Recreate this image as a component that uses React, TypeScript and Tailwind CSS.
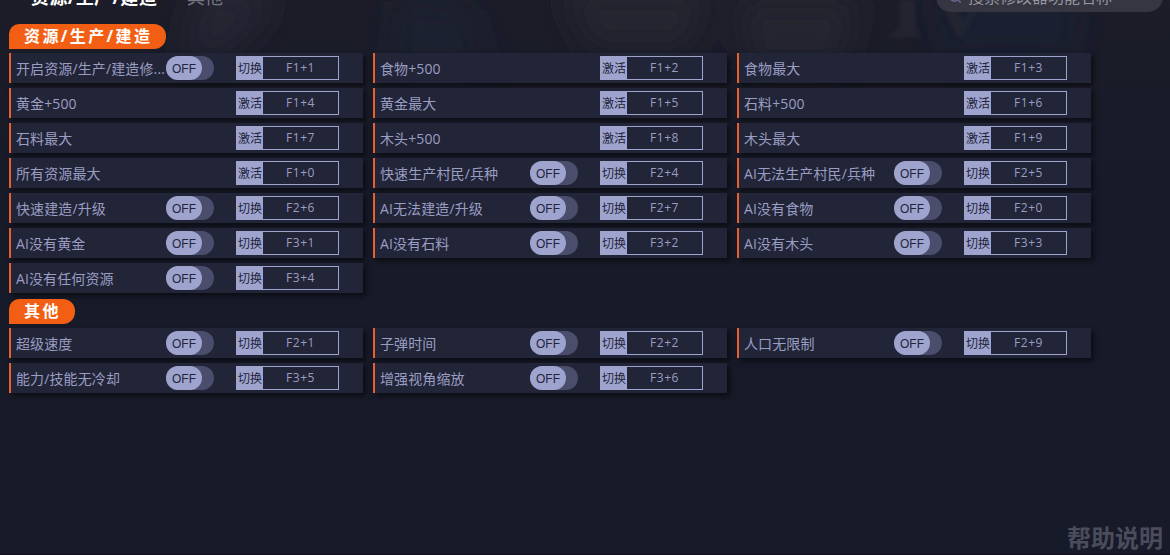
import { Search } from "lucide-react";

type Cheat = { name: string; hotkey: string; toggle?: boolean };

const sections: { title: string; cheats: Cheat[] }[] = [
  {
    title: "资源/生产/建造",
    cheats: [
      { name: "开启资源/生产/建造修...", hotkey: "F1+1", toggle: true },
      { name: "食物+500", hotkey: "F1+2" },
      { name: "食物最大", hotkey: "F1+3" },
      { name: "黄金+500", hotkey: "F1+4" },
      { name: "黄金最大", hotkey: "F1+5" },
      { name: "石料+500", hotkey: "F1+6" },
      { name: "石料最大", hotkey: "F1+7" },
      { name: "木头+500", hotkey: "F1+8" },
      { name: "木头最大", hotkey: "F1+9" },
      { name: "所有资源最大", hotkey: "F1+0" },
      { name: "快速生产村民/兵种", hotkey: "F2+4", toggle: true },
      { name: "AI无法生产村民/兵种", hotkey: "F2+5", toggle: true },
      { name: "快速建造/升级", hotkey: "F2+6", toggle: true },
      { name: "AI无法建造/升级", hotkey: "F2+7", toggle: true },
      { name: "AI没有食物", hotkey: "F2+0", toggle: true },
      { name: "AI没有黄金", hotkey: "F3+1", toggle: true },
      { name: "AI没有石料", hotkey: "F3+2", toggle: true },
      { name: "AI没有木头", hotkey: "F3+3", toggle: true },
      { name: "AI没有任何资源", hotkey: "F3+4", toggle: true },
    ],
  },
  {
    title: "其他",
    cheats: [
      { name: "超级速度", hotkey: "F2+1", toggle: true },
      { name: "子弹时间", hotkey: "F2+2", toggle: true },
      { name: "人口无限制", hotkey: "F2+9", toggle: true },
      { name: "能力/技能无冷却", hotkey: "F3+5", toggle: true },
      { name: "增强视角缩放", hotkey: "F3+6", toggle: true },
    ],
  },
];

function Toggle() {
  return (
    <button className="flex h-6 w-12 rounded-full bg-[#4a4d6b]">
      <span className="flex h-6 w-9 items-center justify-center rounded-full bg-[#9fa4cf] pt-px font-['Liberation_Sans',sans-serif] text-xs leading-none text-[#22243a]">
        OFF
      </span>
    </button>
  );
}

function CheatRow({ cheat }: { cheat: Cheat }) {
  return (
    <div className="flex h-[30px] items-center border-l-2 border-[#e9602c] bg-[#222437] pl-[5px] shadow-[3px_3px_5px_rgba(0,0,0,0.5)]">
      <span className="w-[150px] pt-px text-sm leading-5 tracking-[0.12px] whitespace-nowrap text-[#9a9ec3]">{cheat.name}</span>
      <div className="w-[70px] shrink-0">{cheat.toggle && <Toggle />}</div>
      <div className="flex h-6 w-[103px] shrink-0 border border-[#9fa4cf] text-[#9a9ec3]">
        <span className="flex w-[26px] shrink-0 items-center justify-center bg-[#9fa4cf] pt-px text-xs leading-none whitespace-nowrap text-[#22243a]">
          {cheat.toggle ? "切换" : "激活"}
        </span>
        <span className="flex flex-1 items-center justify-center text-xs leading-none tracking-[0.5px]">{cheat.hotkey}</span>
      </div>
    </div>
  );
}

// Dimmed key art that fades out behind the first rows
function Backdrop() {
  return (
    <svg className="pointer-events-none absolute inset-x-0 top-0 -z-10" width="1170" height="190" viewBox="0 0 1170 190">
      <defs>
        <filter id="soft" filterUnits="userSpaceOnUse" x="0" y="-60" width="1170" height="300">
          <feGaussianBlur stdDeviation="16" />
        </filter>
        <filter id="edge">
          <feGaussianBlur stdDeviation="2" />
        </filter>
        <linearGradient id="fade" x1="0" y1="0" x2="0" y2="1">
          <stop offset="0" stopColor="#171a28" stopOpacity="0" />
          <stop offset="1" stopColor="#171a28" />
        </linearGradient>
      </defs>
      <rect width="1170" height="190" fill="#1c1d29" />
      <g filter="url(#soft)">
        <path d="M200 -10 H275 L260 25 L220 60 H180Z" fill="#262834" />
        <path d="M400 0 L470 10 L490 70 H390Z" fill="#1b2130" />
        <path d="M560 -10 H710 L690 50 H590Z" fill="#272731" />
        <path d="M735 0 H860 L840 70 H750Z" fill="#252731" />
        <path d="M925 -10 H1080 L1070 60 H950Z" fill="#182136" opacity="0.8" />
      </g>
      <g filter="url(#edge)" fill="#292b35" opacity="0.65">
        <path d="M900 0 H916 V26 Q917 33 923 35 V38 H889 V35 Q899 32 900 25Z" />
        <path d="M938 0 H952 L963 23 L977 0 H983 L963 37 H958Z" opacity="0.8" />
      </g>
      <rect width="1170" height="190" fill="url(#fade)" />
    </svg>
  );
}

export default function App() {
  return (
    <div className="relative isolate flex h-[555px] w-[1170px] flex-col overflow-hidden border-b border-[#10111b] bg-[#171a28] font-['Open_Sans','Noto_Sans_CJK_SC',sans-serif]">
      <Backdrop />

      <header className="-mt-[18px] flex h-[30px] shrink-0 items-center justify-between pr-[7px] pl-[31px]">
        <nav className="flex gap-[30px] text-lg leading-none">
          <a className="font-bold tracking-[0.4px] text-white">资源/生产/建造</a>
          <a className="text-[#777883]">其他</a>
        </nav>
        <div className="flex h-[30px] w-[227px] items-center rounded-full bg-[#353642] pl-3 text-base leading-none text-[#94959e]">
          <Search className="mr-1.5 size-3.5 text-[#62678a]" strokeWidth={3} />
          搜索修改器功能名称
        </div>
      </header>

      <main className="flex flex-1 flex-col gap-1.5 pt-3 pl-[9px]">
        {sections.map((section) => (
          <section key={section.title}>
            <h2 className="mb-1 flex h-[25px] w-fit items-center rounded-tl-[10px] rounded-r-[12px] bg-[#f25f14] pr-3.5 pb-0.5 pl-[15px] text-base leading-none font-bold tracking-[2.4px] text-white">
              {section.title}
            </h2>
            <div className="grid grid-cols-[repeat(3,354px)] gap-x-2.5 gap-y-[5px]">
              {section.cheats.map((cheat) => (
                <CheatRow key={cheat.name} cheat={cheat} />
              ))}
            </div>
          </section>
        ))}
      </main>

      <footer className="flex justify-end pr-[7px] pb-1 text-2xl leading-none font-bold text-[#4b4c5b]">帮助说明</footer>
    </div>
  );
}
